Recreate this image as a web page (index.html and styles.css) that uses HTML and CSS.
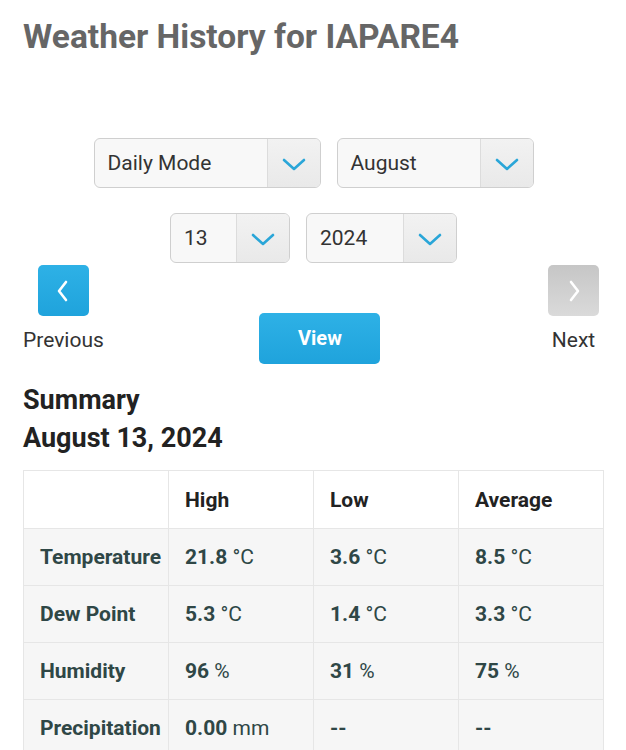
FILE: index.html
```html
<!DOCTYPE html>
<html>
<head>
<meta charset="utf-8">
<link rel="stylesheet" href="styles.css">
</head>
<body>
<div class="page">
  <h1 class="title">Weather History for IAPARE4</h1>

  <div class="controls">
    <div class="select-row">
      <div class="select sel-mode"><span class="sel-text">Daily Mode</span><span class="sel-arrow"><svg width="24" height="14" viewBox="0 0 24 14"><path d="M2 2 L12 11 L22 2" fill="none" stroke="#2aa6d8" stroke-width="2.6" stroke-linecap="round" stroke-linejoin="round"/></svg></span></div>
      <div class="select sel-month"><span class="sel-text">August</span><span class="sel-arrow"><svg width="24" height="14" viewBox="0 0 24 14"><path d="M2 2 L12 11 L22 2" fill="none" stroke="#2aa6d8" stroke-width="2.6" stroke-linecap="round" stroke-linejoin="round"/></svg></span></div>
    </div>
    <div class="select-row">
      <div class="select sel-day"><span class="sel-text">13</span><span class="sel-arrow"><svg width="24" height="14" viewBox="0 0 24 14"><path d="M2 2 L12 11 L22 2" fill="none" stroke="#2aa6d8" stroke-width="2.6" stroke-linecap="round" stroke-linejoin="round"/></svg></span></div>
      <div class="select sel-year"><span class="sel-text">2024</span><span class="sel-arrow"><svg width="24" height="14" viewBox="0 0 24 14"><path d="M2 2 L12 11 L22 2" fill="none" stroke="#2aa6d8" stroke-width="2.6" stroke-linecap="round" stroke-linejoin="round"/></svg></span></div>
    </div>
  </div>

  <div class="nav">
    <div class="nav-item nav-prev">
      <span class="nav-btn btn-blue"><svg width="16" height="24" viewBox="0 0 16 24"><path d="M11 3 L4 12 L11 21" fill="none" stroke="#ffffff" stroke-width="2.6" stroke-linecap="round" stroke-linejoin="round"/></svg></span>
      <span class="nav-label">Previous</span>
    </div>
    <button class="view-btn">View</button>
    <div class="nav-item nav-next">
      <span class="nav-btn btn-grey"><svg width="16" height="24" viewBox="0 0 16 24"><path d="M5 3 L12 12 L5 21" fill="none" stroke="#ffffff" stroke-width="2.6" stroke-linecap="round" stroke-linejoin="round"/></svg></span>
      <span class="nav-label">Next</span>
    </div>
  </div>

  <h2 class="summary">Summary</h2>
  <h2 class="summary-date">August 13, 2024</h2>

  <table class="summary-table">
    <thead>
      <tr><th></th><th>High</th><th>Low</th><th>Average</th></tr>
    </thead>
    <tbody>
      <tr><th>Temperature</th><td><b>21.8</b> °C</td><td><b>3.6</b> °C</td><td><b>8.5</b> °C</td></tr>
      <tr><th>Dew Point</th><td><b>5.3</b> °C</td><td><b>1.4</b> °C</td><td><b>3.3</b> °C</td></tr>
      <tr><th>Humidity</th><td><b>96</b> %</td><td><b>31</b> %</td><td><b>75</b> %</td></tr>
      <tr><th>Precipitation</th><td><b>0.00</b> mm</td><td><b>--</b></td><td><b>--</b></td></tr>
    </tbody>
  </table>
</div>
</body>
</html>
```

FILE: styles.css
```css
html, body {
  margin: 0;
  padding: 0;
  background: #ffffff;
}
body {
  font-family: Roboto, "Liberation Sans", sans-serif;
  color: #222;
  overflow: hidden;
}
.page {
  padding: 0 22px 0 23px;
}
.title {
  margin: 14px 0 0 0;
  font-size: 33.5px;
  line-height: 45px;
  font-weight: 700;
  color: #666666;
}
.controls {
  margin-top: 79px;
  display: flex;
  flex-direction: column;
  align-items: center;
  gap: 25px;
}
.select-row {
  display: flex;
  justify-content: center;
  gap: 16px;
}
.select {
  display: flex;
  height: 50px;
  box-sizing: border-box;
  border: 1px solid #cfcfcf;
  border-radius: 6px;
  background: #f8f8f8;
  overflow: hidden;
}
.sel-text {
  flex: 1;
  display: flex;
  align-items: center;
  padding-left: 13px;
  font-size: 21px;
  color: #333;
}
.sel-arrow {
  width: 52px;
  border-left: 1px solid #dcdcdc;
  background: linear-gradient(#f2f2f2, #e9e9e9);
  display: flex;
  align-items: center;
  justify-content: center;
}
.sel-arrow svg { margin-top: 3px; }
.sel-mode { width: 227px; }
.sel-month { width: 197px; }
.sel-day { width: 120px; }
.sel-year { width: 151px; }

.nav {
  display: flex;
  justify-content: space-between;
  align-items: flex-start;
  margin-top: 1px;
}
.nav-item {
  display: flex;
  flex-direction: column;
  align-items: center;
}
.nav-prev { margin-top: 1px; }
.nav-next { margin-right: 5px; margin-top: 1px; }
.nav-btn {
  width: 51px;
  height: 51px;
  border-radius: 5px;
  display: flex;
  align-items: center;
  justify-content: center;
}
.btn-blue { background: linear-gradient(#2eb1e6, #1fa3dc); }
.btn-grey { background: linear-gradient(#c6c6c6, #dadada); }
.nav-label {
  margin-top: 10px;
  font-size: 21px;
  line-height: 28px;
  color: #333;
}
.view-btn {
  margin-top: 49px;
  margin-left: -12px;
  width: 121px;
  height: 51px;
  border: none;
  border-radius: 5px;
  background: linear-gradient(#2eb1e6, #1fa3dc);
  color: #fff;
  font-family: Roboto, "Liberation Sans", sans-serif;
  font-weight: 700;
  font-size: 20px;
  padding: 0 0 2px 0;
}
.summary, .summary-date {
  margin: 0;
  font-size: 27px;
  font-weight: 700;
  color: #222;
  line-height: 38px;
}
.summary { margin-top: 17px; }
.summary-table {
  margin-top: 13px;
  width: 581px;
  border-collapse: collapse;
  table-layout: fixed;
  font-size: 21px;
  color: #2f4746;
}
.summary-table th, .summary-table td {
  border: 1px solid #e6e6e6;
  height: 57px;
  padding: 0 0 0 16px;
  text-align: left;
  box-sizing: border-box;
}
.summary-table thead th {
  background: #ffffff;
  color: #222;
  font-weight: 700;
  height: 58px;
}
.summary-table tbody tr {
  background: #f6f6f6;
}
.summary-table tbody th {
  font-weight: 700;
}
.summary-table td {
  font-weight: 400;
}
.summary-table td b {
  font-weight: 700;
}
```
